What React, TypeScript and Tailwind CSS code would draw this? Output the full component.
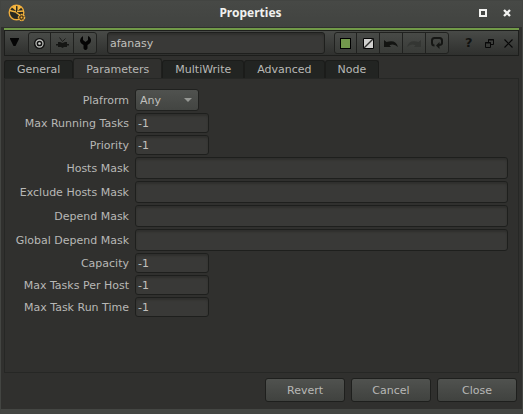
import { useState } from "react";
import type { ReactNode } from "react";

type Field = { id: string; label: string; value: string; wide?: boolean };

const fields: Field[] = [
  { id: "max-running", label: "Max Running Tasks", value: "-1" },
  { id: "priority", label: "Priority", value: "-1" },
  { id: "hosts-mask", label: "Hosts Mask", value: "", wide: true },
  { id: "exclude-hosts", label: "Exclude Hosts Mask", value: "", wide: true },
  { id: "depend-mask", label: "Depend Mask", value: "", wide: true },
  { id: "global-depend", label: "Global Depend Mask", value: "", wide: true },
  { id: "capacity", label: "Capacity", value: "-1" },
  { id: "max-per-host", label: "Max Tasks Per Host", value: "-1" },
  { id: "max-run-time", label: "Max Task Run Time", value: "-1" },
];

const tabs = ["General", "Parameters", "MultiWrite", "Advanced", "Node"];

const inputLook =
  "rounded-[3px] border border-[#1e1f1d] bg-[#393937] px-0.5 text-[#c0c0be] shadow-[inset_0_2px_2px_#2f2f2d] outline-none";

function ToolButton({ label, children }: { label: string; children: ReactNode }) {
  return (
    <button aria-label={label} className="flex w-[23px] items-center justify-center first:w-[22px] last:w-[22px]">
      {children}
    </button>
  );
}

function ToolGroup({ children }: { children: ReactNode }) {
  return (
    <div className="flex h-[22px] shrink-0 divide-x divide-[#20211f] overflow-hidden rounded-[3px] border border-[#20211f] bg-linear-to-b from-[#484a47] to-[#393b38]">
      {children}
    </div>
  );
}

function AppLogo() {
  return (
    <svg width="18" height="18" viewBox="0 0 18 18" className="shrink-0">
      <circle cx="8.5" cy="8.5" r="7.3" fill="#272821" stroke="#eeac3c" strokeWidth="1.4" />
      <path d="M3.500 3 8 1.300 8 7ZM9.500 1.300 14 3 9.500 7Z" fill="#f5b640" />
      <path d="M1.500 6.500 8 8M9 7.500 16 7M8 8.500 13 12" stroke="#f5b640" strokeWidth="1.300" />
      <circle cx="13.5" cy="13.5" r="3" fill="#49361a" stroke="#f3b33e" strokeWidth="1.5" strokeDasharray="1.7 .5" />
      <circle cx="13.5" cy="13.5" r="1" fill="#f3b33e" />
    </svg>
  );
}

function TitleBar() {
  return (
    <header className="flex h-[26px] items-center bg-linear-to-b from-[#474946] to-[#414340] pr-[11px] pb-0.5 pl-[7px]">
      <AppLogo />
      <h1 className="flex-1 text-center font-['Noto_Sans'] text-[12px] leading-4 font-bold text-[#f0f0ee]">Properties</h1>
      <div className="flex justify-end gap-4 pl-1">
        <button aria-label="Maximize">
          <svg width="8" height="8" viewBox="0 0 8 8">
            <path d="M1 1h6v6H1z" fill="none" stroke="#f2f2f0" strokeWidth="2" />
          </svg>
        </button>
        <button aria-label="Close window">
          <svg width="8" height="8" viewBox="0 0 8 8">
            <path d="m1 1 6 6M7 1 1 7" stroke="#f2f2f0" strokeWidth="2.3" />
          </svg>
        </button>
      </div>
    </header>
  );
}

function NodeToolbar() {
  return (
    <div className="flex h-[26px] items-center border border-[#1d1e1c] bg-linear-to-b from-[#484a47] to-[#2f302e]">
      <button aria-label="Collapse" className="ml-[5px] flex h-5 w-[9px] shrink-0 items-start pt-[5px]">
        <svg width="9" height="8" viewBox="0 0 9 8">
          <path d="M0 0h9v1L5.5 8h-2L0 1z" fill="#050505" />
        </svg>
      </button>
      <div className="ml-[9px]">
        <ToolGroup>
          <ToolButton label="Center node">
            <svg width="11" height="11" viewBox="0 0 11 11">
              <circle cx="5.5" cy="5.5" r="5.5" fill="#111" />
              <circle cx="5.5" cy="5.5" r="3.5" fill="none" stroke="#b9bbb7" strokeWidth="1.3" />
              <circle cx="5.5" cy="5.5" r="1.3" fill="#d5d7d3" />
            </svg>
          </ToolButton>
          <ToolButton label="Inputs">
            <svg width="13" height="12" viewBox="0 0 13 12">
              <path d="M0 7h2V5h2l2.5 1L9 5h2v2h2v1.5h-2V10H8l-1.5 1L5 10H2V8.5H0z" fill="#151614" />
              <path d="M3.5.5 6.5 4.5 9.5 1.5" fill="none" stroke="#1c1d1b" strokeWidth="1" />
            </svg>
          </ToolButton>
          <ToolButton label="Settings">
            <svg width="11" height="14" viewBox="0 0 11 14">
              <path d="M3 0v4l2.5 2L8 4V0q3 1.5 3 4.5Q11 7 7.5 9v3.5Q6.5 14 5.5 14t-2-1.5V9Q0 7 0 4.5T3 0z" fill="#050505" />
            </svg>
          </ToolButton>
        </ToolGroup>
      </div>
      <input
        aria-label="Node name"
        defaultValue="afanasy"
        className={`ml-2.5 h-[22px] min-w-0 flex-1 ${inputLook}`}
      />
      <div className="ml-[9px]">
        <ToolGroup>
          <ToolButton label="Node color">
            <span className="size-[11px] border border-black bg-[#73984c]" />
          </ToolButton>
          <ToolButton label="Viewer color">
            <svg width="11" height="11" viewBox="0 0 11 11">
              <path d="M.5.5h10v10H.5z" fill="#d0d0ce" stroke="#050505" />
              <path d="m1 10 9-9" stroke="#30312f" strokeWidth="1.4" />
            </svg>
          </ToolButton>
          <ToolButton label="Undo">
            <svg width="14" height="9" viewBox="0 0 14 9">
              <path d="M0 1v7h7L5.5 6.2Q10 4 14 8 12 0 2.5 3z" fill="#131412" />
            </svg>
          </ToolButton>
          <ToolButton label="Redo">
            <svg width="14" height="9" viewBox="0 0 14 9">
              <path d="M14 1v7H7l1.5-1.8Q4 4 0 8 2 0 11.5 3z" fill="#343633" />
            </svg>
          </ToolButton>
          <ToolButton label="Revert node">
            <svg width="12" height="12" viewBox="0 0 12 12">
              <path d="M3.500 8.500Q1 8.500 1 6V3.500Q1 1 3.500 1h5Q11 1 11 3.500V6Q11 8 8 8" fill="none" stroke="#151614" strokeWidth="2" />
              <path d="M8.500 5v7L5 8.500z" fill="#151614" />
            </svg>
          </ToolButton>
        </ToolGroup>
      </div>
      <div className="mr-[5px] ml-4 flex items-center gap-2.5">
        <button aria-label="Help" className="w-2.5 text-left text-[13px] leading-4 font-bold text-[#111210]">?</button>
        <button aria-label="Float panel">
          <svg width="9" height="9" viewBox="0 0 9 9">
            <path d="M3.5 3V.5h5v5H6M3 1h6M.5 3.5h5v5h-5zM0 4h6" fill="none" stroke="#080808" />
          </svg>
        </button>
        <button aria-label="Close panel">
          <svg width="9" height="9" viewBox="0 0 9 9">
            <path d="m.5.5 8 8M8.5.5l-8 8" stroke="#080808" strokeWidth="1.2" />
          </svg>
        </button>
      </div>
    </div>
  );
}

function Parameters() {
  return (
    <form className="grid grid-cols-[124px_minmax(0,1fr)] items-center gap-x-1.5 gap-y-0.5">
      <label htmlFor="platform" className="pt-0.5 text-right">Plafrorm</label>
      <div className="relative w-16">
        <select
          id="platform"
          className="block h-[22px] w-full appearance-none rounded-[3px] border border-[#20211f] bg-linear-to-b from-[#50524f] to-[#434542] px-1 pt-px text-[#c0c0be] outline-none"
        >
          <option>Any</option>
        </select>
        <svg width="8" height="4" viewBox="0 0 8 4" className="pointer-events-none absolute top-[9px] right-[7px]">
          <path d="M0 0h8L4 4z" fill="#969894" />
        </svg>
      </div>
      {fields.map((f) => (
        <div key={f.id} className="contents">
          <label htmlFor={f.id} className="pt-0.5 text-right">{f.label}</label>
          <input
            id={f.id}
            defaultValue={f.value}
            className={`${f.wide ? "h-[22px] w-full" : "h-5 w-[74px]"} ${inputLook}`}
          />
        </div>
      ))}
    </form>
  );
}

export default function App() {
  const [active, setActive] = useState("Parameters");
  return (
    <div className="flex min-h-screen flex-col border border-[#434542] bg-[#30302e] font-['DejaVu_Sans',sans-serif] text-[11px] leading-4 text-[#b8b8b6]">
      <TitleBar />
      <main className="flex flex-1 flex-col px-[3px] pt-px">
        <div className="h-0.5 bg-[#719a48]" />
        <NodeToolbar />
        <div role="tablist" className="flex items-end pt-0.5">
          {tabs.map((t) => (
            <button
              key={t}
              role="tab"
              aria-selected={t === active}
              onClick={() => setActive(t)}
              className={
                t === active
                  ? "-mb-px h-[21px] rounded-t-[3px] border border-b-0 border-[#1f201e] bg-[#30302e] px-3 pt-px"
                  : "h-[18px] rounded-t-[3px] border border-b-0 border-[#1b1c1a] bg-[#222422] px-3 pt-px"
              }
            >
              {t}
            </button>
          ))}
        </div>
        <section className="flex-1 border border-[#262725] pt-2.5 pr-2.5">
          <Parameters />
        </section>
        <footer className="flex justify-end gap-1.5 pt-[5px] pr-0.5 pb-[7px]">
          {["Revert", "Cancel", "Close"].map((b) => (
            <button
              key={b}
              className="h-6 w-20 rounded-[3px] border border-[#1e1f1d] bg-linear-to-b from-[#50524f] to-[#40423f] pt-px"
            >
              {b}
            </button>
          ))}
        </footer>
      </main>
      <div className="h-1 bg-[#444643]" />
    </div>
  );
}
